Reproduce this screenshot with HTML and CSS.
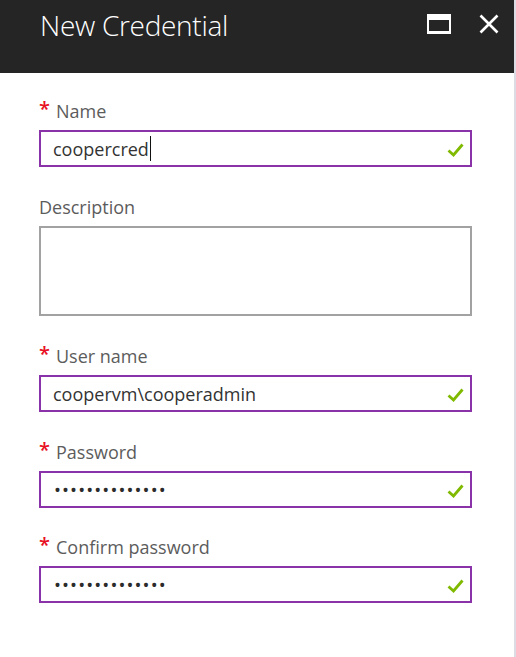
FILE: index.html
```html
<!DOCTYPE html>
<html lang="en">
<head>
<meta charset="utf-8">
<title>New Credential</title>
<link rel="stylesheet" href="styles.css">
</head>
<body>
<div class="blade">
  <header class="blade-header">
    <h1 class="blade-title">New Credential</h1>
    <div class="blade-actions">
      <svg class="icon-max" width="24" height="20" viewBox="0 0 24 20" aria-label="Maximize">
        <rect x="0" y="0" width="24" height="20" fill="#ffffff"/>
        <rect x="2" y="6" width="20" height="11" fill="#252525"/>
      </svg>
      <svg class="icon-close" width="20" height="20" viewBox="0 0 20 20" aria-label="Close">
        <path d="M1.5 1.5 L18.5 18.5 M18.5 1.5 L1.5 18.5" stroke="#ffffff" stroke-width="2.6" fill="none"/>
      </svg>
    </div>
  </header>
  <main class="blade-content">
    <div class="field">
      <label class="field-label"><span class="req">*</span>Name</label>
      <div class="input valid">
        <span class="input-text">coopercred</span><span class="caret"></span>
        <svg class="check" width="17" height="14" viewBox="0 0 17 14"><path d="M1.5 7.5 L6.5 12 L15.5 1.5" stroke="#7fba00" stroke-width="2.8" fill="none"/></svg>
      </div>
    </div>
    <div class="field">
      <label class="field-label">Description</label>
      <div class="textarea"></div>
    </div>
    <div class="field">
      <label class="field-label"><span class="req">*</span>User name</label>
      <div class="input valid">
        <span class="input-text">coopervm\cooperadmin</span>
        <svg class="check" width="17" height="14" viewBox="0 0 17 14"><path d="M1.5 7.5 L6.5 12 L15.5 1.5" stroke="#7fba00" stroke-width="2.8" fill="none"/></svg>
      </div>
    </div>
    <div class="field field-tight">
      <label class="field-label"><span class="req">*</span>Password</label>
      <div class="input valid">
        <span class="input-text dots">••••••••••••••</span>
        <svg class="check" width="17" height="14" viewBox="0 0 17 14"><path d="M1.5 7.5 L6.5 12 L15.5 1.5" stroke="#7fba00" stroke-width="2.8" fill="none"/></svg>
      </div>
    </div>
    <div class="field">
      <label class="field-label"><span class="req">*</span>Confirm password</label>
      <div class="input valid">
        <span class="input-text dots">••••••••••••••</span>
        <svg class="check" width="17" height="14" viewBox="0 0 17 14"><path d="M1.5 7.5 L6.5 12 L15.5 1.5" stroke="#7fba00" stroke-width="2.8" fill="none"/></svg>
      </div>
    </div>
  </main>
</div>
</body>
</html>
```

FILE: styles.css
```css
* { box-sizing: border-box; }
html, body {
  margin: 0;
  padding: 0;
  height: 100%;
  background: #ffffff;
}
body {
  font-family: "Open Sans", "Segoe UI", "Liberation Sans", sans-serif;
}
.blade {
  width: 516px;
  min-height: 657px;
  border-right: 2px solid #dcdce4;
  background: #ffffff;
}
.blade-header {
  height: 73px;
  background: #252525;
  display: flex;
  justify-content: space-between;
  align-items: flex-start;
  padding: 6px 15px 0 40px;
}
.blade-title {
  margin: 0;
  font-size: 28px;
  font-weight: 300;
  line-height: 38px;
  color: #ffffff;
  letter-spacing: -0.3px;
}
.blade-actions {
  display: flex;
  align-items: center;
  gap: 28px;
  padding-top: 8px;
}
.icon-max, .icon-close { display: block; }
.blade-content {
  padding: 26px 42px 0 39px;
}
.field {
  margin-bottom: 28px;
}
.field-tight {
  margin-bottom: 27px;
}
.field-label {
  display: flex;
  align-items: flex-start;
  font-size: 18px;
  line-height: 24px;
  color: #5c5c5c;
  margin-bottom: 7px;
}
.req {
  color: #e81123;
  font-size: 20px;
  line-height: 20px;
  margin-right: 6px;
  font-weight: 600;
}
.input {
  position: relative;
  height: 37px;
  border: 2px solid #8a32a8;
  display: flex;
  align-items: center;
  padding: 0 12px;
  font-size: 18px;
  color: #333333;
}
.input-text {
  white-space: pre;
  line-height: 24px;
}
.dots {
  letter-spacing: 1.1px;
  font-size: 18.5px;
  padding-left: 1px;
  color: #2b2b2b;
}
.caret {
  display: inline-block;
  width: 1px;
  height: 25px;
  background: #111111;
  margin-left: 1px;
}
.check {
  position: absolute;
  right: 6px;
  top: 11px;
}
.textarea {
  height: 90px;
  border: 2px solid #a2a2a2;
}
```
